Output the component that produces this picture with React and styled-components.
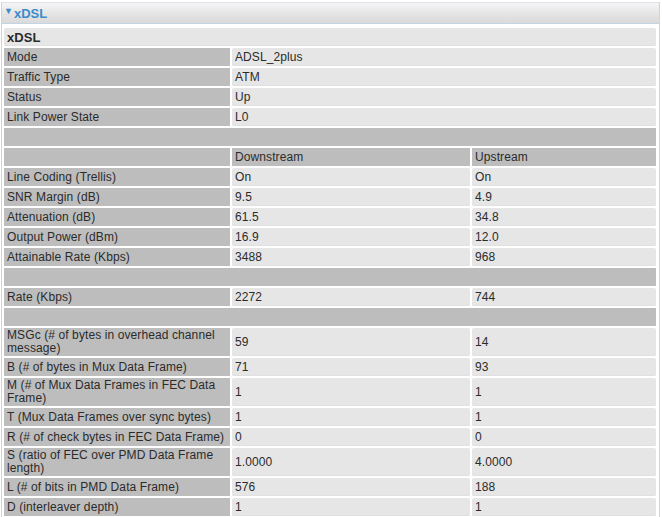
import React from "react";
import styled, { createGlobalStyle } from "styled-components";

const Global = createGlobalStyle`
  body {
    margin: 0;
    background: #ffffff;
    font-family: "Liberation Sans", Arial, sans-serif;
  }
`;

const Panel = styled.div`
  width: 657px;
  margin: 2px 0 0 1px;
  border-left: 1px solid #c9d5df;
  border-right: 1px solid #c9d5df;
`;

const Header = styled.div`
  display: flex;
  align-items: center;
  gap: 1px;
  height: 20px;
  padding-left: 2px;
  border-top: 1px solid #dde3e8;
  border-bottom: 1px solid #c3d5e4;
  background: linear-gradient(#f5f5f5, #e3e3e3 60%, #dadada);
  color: #3a8ccb;
  font-size: 13px;
  font-weight: bold;
`;

const Arrow = styled.span`
  font-size: 9px;
  position: relative;
  top: -2px;
`;

const Table = styled.table`
  width: 656px;
  margin-top: 2px;
  border-spacing: 2px;
  table-layout: fixed;
  font-size: 12px;
  color: #2b2b2b;
`;

const Cell = styled.td`
  height: ${(p) => (p.$tall ? 28 : 18)}px;
  padding: 0 3px;
  line-height: 13px;
  background: ${(p) => (p.$dark ? "#bdbdbd" : "#e6e6e6")};
  font-weight: ${(p) => (p.$bold ? "bold" : "normal")};
  font-size: ${(p) => (p.$bold ? "13px" : "12px")};
  letter-spacing: 0.1px;
  border-radius: ${(p) => (p.$dark ? 0 : 2)}px;
  box-shadow: ${(p) => (p.$dark ? "none" : "inset 0 -1px 0 #e0e0e0")};
  vertical-align: middle;
`;

const info = [
  ["Mode", "ADSL_2plus"],
  ["Traffic Type", "ATM"],
  ["Status", "Up"],
  ["Link Power State", "L0"],
];

const line = [
  ["Line Coding (Trellis)", "On", "On"],
  ["SNR Margin (dB)", "9.5", "4.9"],
  ["Attenuation (dB)", "61.5", "34.8"],
  ["Output Power (dBm)", "16.9", "12.0"],
  ["Attainable Rate (Kbps)", "3488", "968"],
];

const frame = [
  ["MSGc (# of bytes in overhead channel message)", "59", "14", true],
  ["B (# of bytes in Mux Data Frame)", "71", "93"],
  ["M (# of Mux Data Frames in FEC Data Frame)", "1", "1", true],
  ["T (Mux Data Frames over sync bytes)", "1", "1"],
  ["R (# of check bytes in FEC Data Frame)", "0", "0"],
  ["S (ratio of FEC over PMD Data Frame length)", "1.0000", "4.0000", true],
  ["L (# of bits in PMD Data Frame)", "576", "188"],
  ["D (interleaver depth)", "1", "1"],
];

const Triple = ({ row }) => (
  <tr>
    <Cell $dark $tall={row[3]}>{row[0]}</Cell>
    <Cell $tall={row[3]}>{row[1]}</Cell>
    <Cell $tall={row[3]}>{row[2]}</Cell>
  </tr>
);

const Blank = () => (
  <tr>
    <Cell $dark colSpan={3} />
  </tr>
);

export default function App() {
  return (
    <>
      <Global />
      <Panel>
        <Header>
          <Arrow>▼</Arrow>xDSL
        </Header>
        <Table>
          <colgroup>
            <col style={{ width: 226 }} />
            <col style={{ width: 238 }} />
            <col />
          </colgroup>
          <tbody>
            <tr>
              <Cell $bold colSpan={3}>xDSL</Cell>
            </tr>
            {info.map(([k, v]) => (
              <tr key={k}>
                <Cell $dark>{k}</Cell>
                <Cell colSpan={2}>{v}</Cell>
              </tr>
            ))}
            <Blank />
            <tr>
              <Cell $dark />
              <Cell $dark>Downstream</Cell>
              <Cell $dark>Upstream</Cell>
            </tr>
            {line.map((r) => (
              <Triple key={r[0]} row={r} />
            ))}
            <Blank />
            <Triple row={["Rate (Kbps)", "2272", "744"]} />
            <Blank />
            {frame.map((r) => (
              <Triple key={r[0]} row={r} />
            ))}
          </tbody>
        </Table>
      </Panel>
    </>
  );
}
